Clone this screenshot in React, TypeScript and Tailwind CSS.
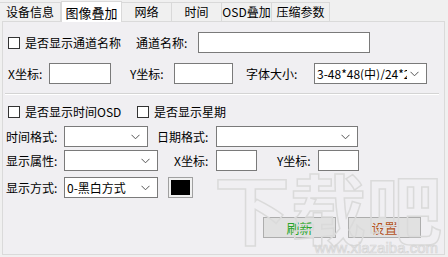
import type { ReactNode } from "react";

const tabs = ["设备信息", "图像叠加", "网络", "时间", "OSD叠加", "压缩参数"];
const tabWidths = [61, 61, 50, 50, 50, 58];

function Check({ label }: { label: string }) {
  return (
    <label className="flex items-center gap-[5px] whitespace-nowrap">
      <span className="w-[12px] h-[12px] border border-[#333] bg-white" />
      <span>{label}</span>
    </label>
  );
}

function Box({ w, children }: { w: number; children?: ReactNode }) {
  return (
    <div
      className="h-[21px] border border-[#7a7a7a] bg-white flex items-center px-[2px]"
      style={{ width: w }}
    >
      {children}
    </div>
  );
}

function Select({ w, value }: { w: number; value?: string }) {
  return (
    <div
      className="h-[21px] border border-[#7a7a7a] bg-white flex items-center pl-[2px] pr-[7px]"
      style={{ width: w }}
    >
      <span className="flex-1 overflow-hidden whitespace-nowrap">{value}</span>
      <svg width="9" height="6" viewBox="0 0 9 6" className="shrink-0 ml-[3px]">
        <path d="M0.5 0.8 L4.5 4.8 L8.5 0.8" fill="none" stroke="#555" strokeWidth="1" />
      </svg>
    </div>
  );
}

export default function App() {
  return (
    <div className="relative w-[448px] h-[257px] overflow-hidden bg-[#f0f0f0] text-[12px] text-black font-['Noto_Sans_CJK_SC','Noto_Sans',sans-serif] leading-none">
      {/* tab strip */}
      <div className="flex items-end h-[21px]">
        {tabs.map((t, i) =>
          i === 1 ? (
            <div
              key={t}
              className="h-[21px] bg-white border-x border-t border-[#d9d9d9] flex items-center justify-center text-[13px] whitespace-nowrap relative z-10 -mb-px"
              style={{ width: tabWidths[i] }}
            >
              {t}
            </div>
          ) : (
            <div
              key={t}
              className="h-[19px] bg-[#f0f0f0] border-t border-r border-[#d9d9d9] flex items-center justify-center text-[12px] whitespace-nowrap"
              style={{ width: tabWidths[i] }}
            >
              {t}
            </div>
          )
        )}
      </div>

      {/* panel */}
      <div className="ml-[2px] w-[443px] h-[234px] border border-[#dadada] bg-[#f0eff2] flex flex-col">
        <div className="flex items-center mt-[10px] h-[21px]">
          <div className="ml-[5px]">
            <Check label="是否显示通道名称" />
          </div>
          <span className="ml-[15px] w-[62px]">通道名称:</span>
          <Box w={172} />
        </div>

        <div className="flex items-center mt-[10px] h-[21px]">
          <span className="ml-[5px] w-[41px]">X坐标:</span>
          <Box w={62} />
          <span className="ml-[19px] w-[44px]">Y坐标:</span>
          <Box w={59} />
          <span className="ml-[13px] w-[68px]">字体大小:</span>
          <Select w={113} value="3-48*48(中)/24*24" />
        </div>

        <div className="mt-[9px] ml-[2px] w-[434px] h-[2px] border-t border-[#d4d4d4] border-b border-b-white" />

        <div className="flex items-center mt-[10px] h-[14px]">
          <div className="ml-[5px] w-[129px]">
            <Check label="是否显示时间OSD" />
          </div>
          <Check label="是否显示星期" />
        </div>

        <div className="flex items-center mt-[7px] h-[21px]">
          <span className="ml-[3px] w-[58px]">时间格式:</span>
          <Select w={84} />
          <span className="ml-[9px] w-[59px]">日期格式:</span>
          <Select w={142} />
        </div>

        <div className="flex items-center mt-[3px] h-[21px]">
          <span className="ml-[3px] w-[58px]">显示属性:</span>
          <Select w={94} />
          <span className="ml-[16px] w-[42px]">X坐标:</span>
          <Box w={41} />
          <span className="ml-[20px] w-[41px]">Y坐标:</span>
          <Box w={41} />
        </div>

        <div className="flex items-center mt-[6px] h-[21px]">
          <span className="ml-[3px] w-[58px]">显示方式:</span>
          <Select w={94} value="0-黑白方式" />
          <div className="ml-[10px] w-[25px] h-[21px] border border-[#a0a0a0] bg-[#f0f0f0] p-[2px]">
            <div className="w-full h-full bg-black" />
          </div>
        </div>

        <div className="flex mt-[19px] h-[21px]">
          <button className="ml-[260px] w-[73px] h-[21px] bg-[#e1e1e1] border border-[#adadad] text-[#2aa52a] text-[13px]">
            刷新
          </button>
          <button className="ml-[12px] w-[73px] h-[21px] bg-[#e1e1e1] border border-[#adadad] text-[#b5531c] text-[13px]">
            设置
          </button>
        </div>
      </div>

      {/* watermark */}
      <div className="absolute right-[6px] top-[168px] text-[76px] font-bold leading-none text-transparent [-webkit-text-stroke:1.5px_#dadada] pointer-events-none">
        下载吧
      </div>
      <div className="absolute right-[10px] bottom-[2px] text-[15px] text-transparent [-webkit-text-stroke:0.7px_#d4d4d4] font-['Liberation_Sans',sans-serif] pointer-events-none">
        www.xiazaiba.com
      </div>
    </div>
  );
}
